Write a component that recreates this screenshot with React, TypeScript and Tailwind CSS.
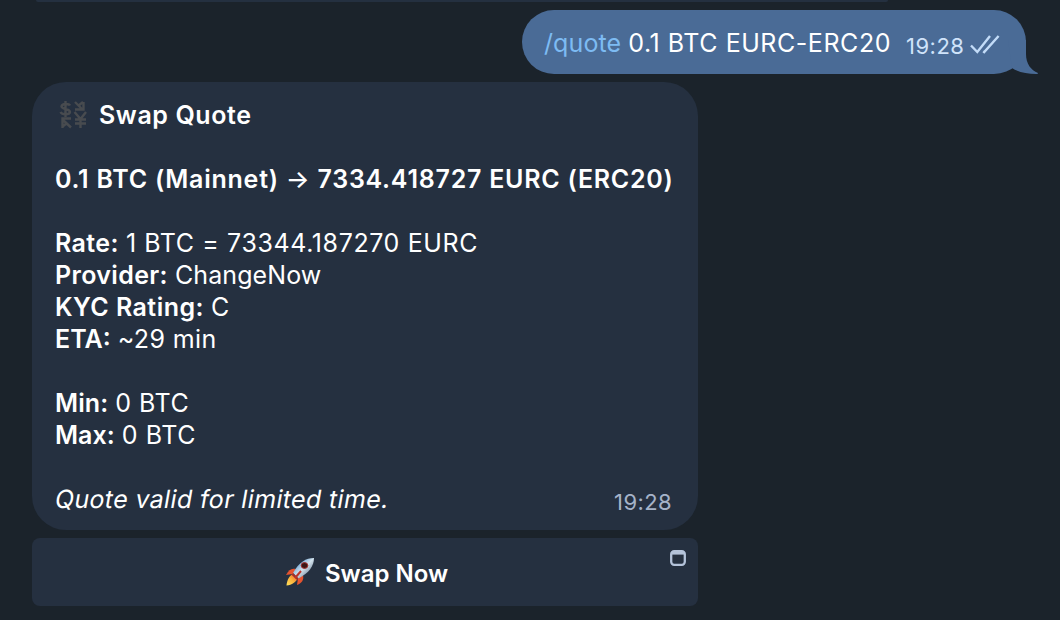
const details = [
  { label: "Rate:", value: "1 BTC = 73344.187270 EURC", labelClass: "tracking-[0.4px]", valueClass: "tracking-[0.6px]" },
  { label: "Provider:", value: "ChangeNow", labelClass: "tracking-[0.35px]", valueClass: "tracking-[0.1px]" },
  { label: "KYC Rating:", value: "C", labelClass: "tracking-[0.45px]", valueClass: "" },
  { label: "ETA:", value: "~29 min", labelClass: "", valueClass: "tracking-[0.4px]" },
];

const limits = [
  { label: "Min:", value: "0 BTC", labelClass: "tracking-[0.1px]", valueClass: "tracking-[0.5px]" },
  { label: "Max:", value: "0 BTC", labelClass: "", valueClass: "tracking-[0.6px]" },
];

function DoubleCheck() {
  return (
    <svg viewBox="0 0 30 20" className="h-5 w-[30px]" fill="none" stroke="#c3dcf8" strokeWidth="2.4">
      <path d="M1 10.5 L7.3 17 L20 1" />
      <path d="M13.2 16.2 L14.2 17 L28.6 1" />
    </svg>
  );
}

function BubbleTail() {
  return (
    <svg viewBox="0 0 40 34" className="absolute bottom-0 -right-3 h-[34px] w-10" fill="#4a6b96">
      <path d="M28 0 V14 C28 24 33 30 40 33 C40 34 39 34 38 34 C29 34 20 32 14 28 L10 0 Z" />
    </svg>
  );
}

function CurrencyIcon() {
  return (
    <svg viewBox="0 0 28 30" className="h-[30px] w-7" fill="none" stroke="#484b4f" strokeWidth="2.4">
      <path d="M11 5.5 C10 3.5 3 3 2.5 6.5 C2.5 9.5 11 8.5 11 12 C10.5 15 3 15 1.5 12 M6.5 1 V17" />
      <path d="M16 2 L23 9 M24 2 L19 6 M16 9.5 H24.5 V2" />
      <path d="M15.5 12 L21.5 19 L27 12 M21.5 18 V28 M16 19.5 H27 M16 23.5 H27" />
      <path d="M3.5 28 V18.5 H12 M4 20 L12 27.5 M8 23 L3 27" />
    </svg>
  );
}

function Rocket() {
  return (
    <svg viewBox="0 0 30 30" className="h-[30px] w-[30px]">
      <defs>
        <linearGradient id="hull" x1="0" y1="0" x2="1" y2="1">
          <stop offset="0.2" stopColor="#5d9bd2" />
          <stop offset="0.5" stopColor="#d3e3ee" />
          <stop offset="0.85" stopColor="#6c7d92" />
        </linearGradient>
        <linearGradient id="flame" x1="1" y1="0" x2="0" y2="1">
          <stop offset="0" stopColor="#e8452a" />
          <stop offset="0.5" stopColor="#fbb03a" />
          <stop offset="1" stopColor="#ffe35c" />
        </linearGradient>
      </defs>
      <path d="M11 12 C6 11 4 13 1 18 L8 17 Z" fill="#e5532f" />
      <path d="M18 18 C19 23 17 26 12 28 L13 21 Z" fill="#e5532f" />
      <path d="M8 17 C4 19 2 23 1.5 28.5 C7 28 11 25 13 21 Z" fill="url(#flame)" />
      <path d="M29 1 C21 1 14 5 8 16 L13.5 21.5 C24 16 29 9 29 1 Z" fill="url(#hull)" />
      <path d="M8 16 L13.5 21.5 L12 23 L6.8 18 Z" fill="#a32f2a" />
      <ellipse cx="19.5" cy="8.5" rx="3.3" ry="2.9" fill="#3a1717" stroke="#a5302d" />
      <path d="M16 14 L10 21" stroke="#bd3429" strokeWidth="2" />
    </svg>
  );
}

function WebAppIcon() {
  return (
    <svg viewBox="0 0 16 16" className="h-4 w-4" fill="none">
      <rect x="1.2" y="1.2" width="13.6" height="13.6" rx="3" stroke="#b4c3da" strokeWidth="2.3" />
      <path d="M2 3.3 H14" stroke="#b4c3da" strokeWidth="2.6" />
    </svg>
  );
}

type RowProps = { label: string; value: string; labelClass: string; valueClass: string };

function Row({ label, value, labelClass, valueClass }: RowProps) {
  return (
    <p>
      <span className={`font-semibold ${labelClass}`}>{label}</span>{" "}
      <span className={valueClass}>{value}</span>
    </p>
  );
}

export default function App() {
  return (
    <div className="flex h-[620px] w-[1060px] flex-col overflow-hidden bg-[#1b232b] font-['Inter',sans-serif] text-[25px] leading-8 text-white">
      {/* Bottom edge of the previous message */}
      <div className="ml-9 h-0.5 w-[852px] shrink-0 rounded-b-full bg-[#243040]" />

      {/* Outgoing command */}
      <div className="relative mt-2 mr-[34px] flex h-16 w-[504px] shrink-0 items-center self-end rounded-[32px] bg-[#4a6b96] pt-0.5 pl-[22px]">
        <BubbleTail />
        <p className="relative w-[362px] whitespace-nowrap">
          <span className="tracking-[0.1px] text-[#7dbbf3]">/quote</span>{" "}
          <span className="tracking-[0.55px]">0.1 BTC EURC-ERC20</span>
        </p>
        <span className="relative mt-1.5 text-[22px] tracking-[0.5px] text-[#d0e3fa]">19:28</span>
        <span className="relative mt-1 ml-1.5">
          <DoubleCheck />
        </span>
      </div>

      {/* Bot reply */}
      <div className="mt-2 ml-8 h-[448px] w-[666px] shrink-0 rounded-[34px] bg-[#253040] px-[23px] pt-[17px] whitespace-nowrap">
        <div className="flex items-center pl-1 font-semibold">
          <CurrencyIcon />
          <span className="ml-3 tracking-[0.6px]">Swap Quote</span>
        </div>
        <p className="mt-8 font-semibold tracking-[0.75px]">
          0.1 BTC (Mainnet) <span className="font-medium">→</span> 7334.418727 EURC (ERC20)
        </p>
        <div className="mt-8">
          {details.map((d) => (
            <Row key={d.label} {...d} />
          ))}
        </div>
        <div className="mt-8">
          {limits.map((l) => (
            <Row key={l.label} {...l} />
          ))}
        </div>
        <div className="mt-8 flex justify-between">
          <span className="-skew-x-[10deg] tracking-[0.35px]">Quote valid for limited time.</span>
          <span className="mt-[3px] mr-[3px] text-[22px] tracking-[0.4px] text-[#a5b3c9]">19:28</span>
        </div>
      </div>

      {/* Inline keyboard */}
      <button className="relative mt-2 ml-8 flex h-[68px] w-[666px] shrink-0 items-center rounded-lg bg-[#253040] pl-[253px]">
        <Rocket />
        <span className="mt-[3px] ml-[10px] text-[24px] font-semibold">Swap Now</span>
        <span className="absolute top-3 right-3">
          <WebAppIcon />
        </span>
      </button>
    </div>
  );
}
